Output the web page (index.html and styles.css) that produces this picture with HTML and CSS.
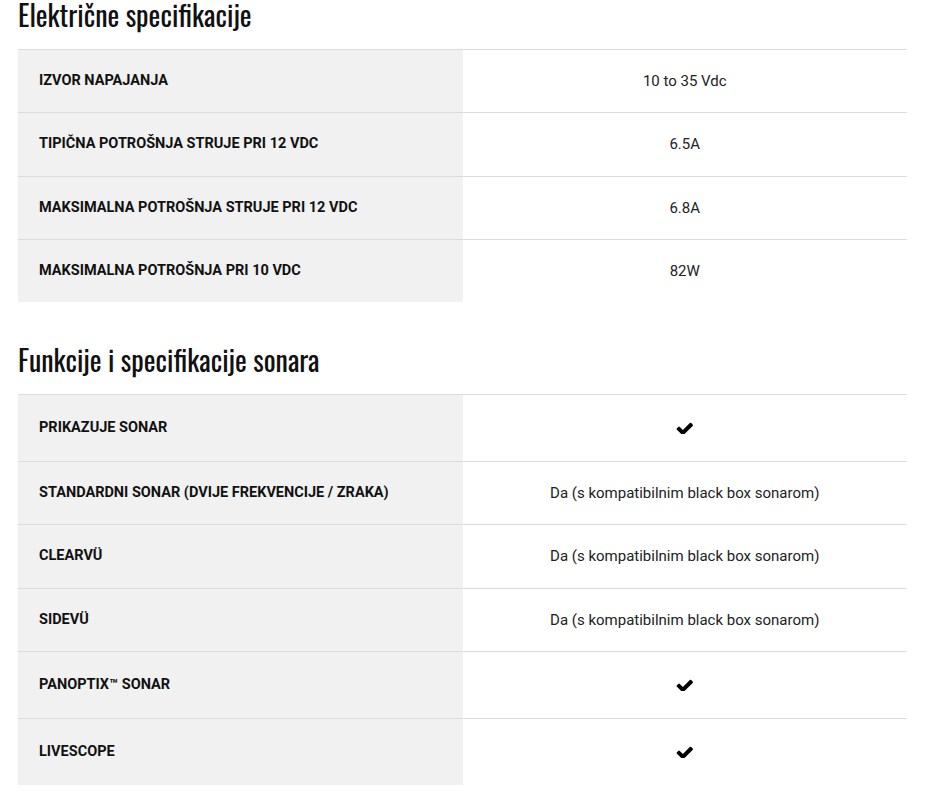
FILE: index.html
```html
<!DOCTYPE html>
<html lang="hr">
<head>
<meta charset="utf-8">
<title>Specifikacije</title>
<link rel="stylesheet" href="styles.css">
</head>
<body>
<main class="page">
  <section class="spec">
    <h2 class="spec-title">Električne specifikacije</h2>
    <table class="spec-table">
      <colgroup><col class="col-half"><col class="col-half"></colgroup>
      <tr><th>IZVOR NAPAJANJA</th><td>10 to 35 Vdc</td></tr>
      <tr><th>TIPIČNA POTROŠNJA STRUJE PRI 12 VDC</th><td>6.5A</td></tr>
      <tr><th>MAKSIMALNA POTROŠNJA STRUJE PRI 12 VDC</th><td>6.8A</td></tr>
      <tr><th>MAKSIMALNA POTROŠNJA PRI 10 VDC</th><td>82W</td></tr>
    </table>
  </section>
  <section class="spec">
    <h2 class="spec-title">Funkcije i specifikacije sonara</h2>
    <table class="spec-table">
      <colgroup><col class="col-half"><col class="col-half"></colgroup>
      <tr><th>PRIKAZUJE SONAR</th><td><span class="check"><svg viewBox="64 260 1607 1140" width="17" height="12"><path d="M1671 566q0 40-28 68l-724 724-136 136q-28 28-68 28t-68-28l-136-136-362-362q-28-28-28-68t28-68l136-136q28-28 68-28t68 28l294 295 656-657q28-28 68-28t68 28l136 136q28 28 28 68z"/></svg></span></td></tr>
      <tr><th>STANDARDNI SONAR (DVIJE FREKVENCIJE / ZRAKA)</th><td>Da (s kompatibilnim black box sonarom)</td></tr>
      <tr><th>CLEARVÜ</th><td>Da (s kompatibilnim black box sonarom)</td></tr>
      <tr><th>SIDEVÜ</th><td>Da (s kompatibilnim black box sonarom)</td></tr>
      <tr><th>PANOPTIX™ SONAR</th><td><span class="check"><svg viewBox="64 260 1607 1140" width="17" height="12"><path d="M1671 566q0 40-28 68l-724 724-136 136q-28 28-68 28t-68-28l-136-136-362-362q-28-28-28-68t28-68l136-136q28-28 68-28t68 28l294 295 656-657q28-28 68-28t68 28l136 136q28 28 28 68z"/></svg></span></td></tr>
      <tr><th>LIVESCOPE</th><td><span class="check"><svg viewBox="64 260 1607 1140" width="17" height="12"><path d="M1671 566q0 40-28 68l-724 724-136 136q-28 28-68 28t-68-28l-136-136-362-362q-28-28-28-68t28-68l136-136q28-28 68-28t68 28l294 295 656-657q28-28 68-28t68 28l136 136q28 28 28 68z"/></svg></span></td></tr>
    </table>
  </section>
</main>
</body>
</html>
```

FILE: styles.css
```css
html, body {
  margin: 0;
  padding: 0;
  background: #fff;
}

body {
  font-family: Roboto, "Liberation Sans", Arial, sans-serif;
  color: #111;
}

.page {
  width: 889px;
  margin-left: 18px;
}

.spec + .spec {
  margin-top: 43px;
}

.spec-title {
  margin: 0 0 19px;
  font-family: "Oswald", "Liberation Sans Narrow", "DejaVu Sans Condensed", sans-serif;
  font-stretch: condensed;
  font-weight: normal;
  font-size: 28px;
  line-height: 30px;
  color: #111;
}

.spec-table {
  width: 100%;
  border-collapse: collapse;
  table-layout: fixed;
}

.col-half {
  width: 50%;
}

.spec-table tr {
  border-top: 1px solid #dcdcdc;
}

.spec-table th,
.spec-table td {
  padding: 21px 21px;
  line-height: 20.3px;
}

.spec-table th {
  background: #f1f1f1;
  text-align: left;
  font-weight: bold;
  font-size: 14.5px;
  color: #111;
}

.spec-table td {
  text-align: center;
  font-size: 15px;
  color: #222;
}

.check {
  display: flex;
  height: 24px;
  align-items: center;
  justify-content: center;
}

.check svg {
  display: block;
  fill: #000;
}
```
